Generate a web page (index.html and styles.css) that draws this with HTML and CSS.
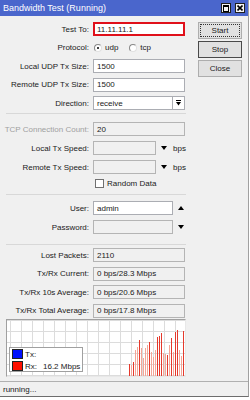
FILE: index.html
```html
<!DOCTYPE html>
<html lang="en">
<head>
    <meta charset="UTF-8">
    <title>Bandwidth Test (Running)</title>
    <link rel="stylesheet" href="styles.css">
</head>
<body>
    <div class="window">
        <div class="titlebar">
            <span class="title">Bandwidth Test (Running)</span>
            <div class="wbtns">
                <span class="wbtn"><span class="maxbox"></span></span>
                <span class="wbtn">
                    <svg width="6" height="6" viewBox="0 0 6 6"><path d="M0.5 0.5 L5.5 5.5 M5.5 0.5 L0.5 5.5" stroke="#000" stroke-width="1.6"/></svg>
                </span>
            </div>
        </div>

        <div class="main">
            <div class="form">
                <div class="group">
                    <div class="row">
                        <span class="label">Test To:</span>
                        <span class="field red">11.11.11.1</span>
                    </div>
                    <div class="row">
                        <span class="label">Protocol:</span>
                        <span class="radio on"></span><span class="opt">udp</span>
                        <span class="radio"></span><span class="opt">tcp</span>
                    </div>
                    <div class="row">
                        <span class="label">Local UDP Tx Size:</span>
                        <span class="field">1500</span>
                    </div>
                    <div class="row">
                        <span class="label">Remote UDP Tx Size:</span>
                        <span class="field">1500</span>
                    </div>
                    <div class="row">
                        <span class="label">Direction:</span>
                        <span class="field short">receive</span>
                        <span class="dropbtn">
                            <svg width="5" height="6" viewBox="0 0 5 6"><path d="M0 0.5 H5" stroke="#000" stroke-width="1"/><path d="M0 2 H5 L2.5 5.5 Z" fill="#000"/></svg>
                        </span>
                    </div>
                </div>

                <div class="sep first"></div>

                <div class="group wide">
                    <div class="row">
                        <span class="label dim">TCP Connection Count:</span>
                        <span class="field off">20</span>
                    </div>
                    <div class="row">
                        <span class="label">Local Tx Speed:</span>
                        <span class="field off speed"></span>
                        <span class="arrow down"></span>
                        <span class="unit">bps</span>
                    </div>
                    <div class="row">
                        <span class="label">Remote Tx Speed:</span>
                        <span class="field off speed"></span>
                        <span class="arrow down"></span>
                        <span class="unit">bps</span>
                    </div>
                    <div class="row check-row">
                        <span class="label"></span>
                        <span class="checkbox"></span>
                        <span class="opt">Random Data</span>
                    </div>
                </div>

                <div class="sep second"></div>

                <div class="group wide">
                    <div class="row">
                        <span class="label">User:</span>
                        <span class="field short">admin</span>
                        <span class="arrow up"></span>
                    </div>
                    <div class="row">
                        <span class="label">Password:</span>
                        <span class="field short off"></span>
                        <span class="arrow down"></span>
                    </div>
                </div>

                <div class="sep third"></div>

                <div class="group">
                    <div class="row">
                        <span class="label">Lost Packets:</span>
                        <span class="field off">2110</span>
                    </div>
                    <div class="row">
                        <span class="label">Tx/Rx Current:</span>
                        <span class="field off">0 bps/28.3 Mbps</span>
                    </div>
                    <div class="row">
                        <span class="label">Tx/Rx 10s Average:</span>
                        <span class="field off">0 bps/20.6 Mbps</span>
                    </div>
                    <div class="row">
                        <span class="label">Tx/Rx Total Average:</span>
                        <span class="field off">0 bps/17.8 Mbps</span>
                    </div>
                </div>

                <div class="graph">
                    <div class="bars">
                        <span class="bar deep" style="height: 12px"></span>
                        <span class="bar pale" style="height: 11px"></span>
                        <span class="bar deep" style="height: 14px"></span>
                        <span class="bar pale" style="height: 26px"></span>
                        <span class="bar pale" style="height: 29px"></span>
                        <span class="bar deep" style="height: 36px"></span>
                        <span class="bar pale" style="height: 28px"></span>
                        <span class="bar pale" style="height: 18px"></span>
                        <span class="bar pale" style="height: 28px"></span>
                        <span class="bar pale" style="height: 31px"></span>
                        <span class="bar deep" style="height: 34px"></span>
                        <span class="bar pale" style="height: 24px"></span>
                        <span class="bar pale" style="height: 19px"></span>
                        <span class="bar pale" style="height: 26px"></span>
                        <span class="bar deep" style="height: 39px"></span>
                        <span class="bar deep" style="height: 40px"></span>
                        <span class="bar deep" style="height: 43px"></span>
                        <span class="bar pale" style="height: 23px"></span>
                        <span class="bar pale" style="height: 22px"></span>
                        <span class="bar deep" style="height: 21px"></span>
                        <span class="bar pale" style="height: 31px"></span>
                        <span class="bar deep" style="height: 38px"></span>
                        <span class="bar pale" style="height: 24px"></span>
                        <span class="bar deep" style="height: 44px"></span>
                        <span class="bar deep" style="height: 46px"></span>
                        <span class="bar pale" style="height: 26px"></span>
                        <span class="bar pale" style="height: 20px"></span>
                        <span class="bar deep" style="height: 45px"></span>
                    </div>
                    <div class="legend">
                        <div class="legend-item"><span class="swatch tx"></span>Tx:</div>
                        <div class="legend-item"><span class="swatch rx"></span>Rx:<span class="rate">16.2 Mbps</span></div>
                    </div>
                </div>
            </div>

            <div class="side">
                <span class="btn focus">Start</span>
                <span class="btn default">Stop</span>
                <span class="btn">Close</span>
            </div>
        </div>

        <div class="status">running...</div>
    </div>
</body>
</html>
```

FILE: styles.css
```css
html, body {
    margin: 0;
    padding: 0;
    background-color: white;
}

body {
    font-family: "Liberation Sans", Arial, sans-serif;
    font-size: 8px;
    color: #1a1a1a;
}

.window {
    width: 248px;
    height: 396px;
    background-color: #f0f0f0;
    border-right: 1px solid #a0a0a0;
    border-bottom: 1px solid #6d6d6d;
    display: flex;
    flex-direction: column;
}

.titlebar {
    height: 16px;
    flex-shrink: 0;
    background-color: #4a66cc;
    color: white;
    display: flex;
    align-items: center;
    justify-content: space-between;
    padding: 0 3px;
}

.title {
    font-size: 9px;
}

.wbtns {
    display: flex;
    gap: 4px;
}

.wbtn {
    width: 8px;
    height: 8px;
    border: 1px solid #1e1e1e;
    background-color: #f4f4f4;
    display: flex;
    align-items: center;
    justify-content: center;
}

.maxbox {
    width: 4px;
    height: 4px;
    border: 1px solid #000;
    border-top-width: 2px;
}

.main {
    display: flex;
}

.form {
    width: 186px;
    padding-top: 6px;
}

.group {
    display: flex;
    flex-direction: column;
    gap: 4.5px;
}

.group.wide {
    gap: 5px;
}

.row {
    display: flex;
    align-items: center;
    height: 14px;
}

.label {
    width: 93px;
    flex-shrink: 0;
    box-sizing: border-box;
    padding-right: 4px;
    text-align: right;
    white-space: nowrap;
}

.label.dim {
    color: #a0a0a0;
}

.field {
    width: 92px;
    height: 14px;
    box-sizing: border-box;
    border: 1px solid #abadb3;
    background-color: white;
    padding-left: 3px;
    display: flex;
    align-items: center;
    white-space: nowrap;
}

.field.red {
    border: 2px solid #e0101a;
    padding-left: 2px;
}

.field.off {
    background-color: #f0f0f0;
    border-color: #b4b4b4;
}

.field.short {
    width: 80px;
}

.field.speed {
    width: 63px;
}

.dropbtn {
    width: 12px;
    height: 14px;
    box-sizing: border-box;
    border: 1px solid #abadb3;
    border-left: none;
    background-color: white;
    display: flex;
    align-items: center;
    justify-content: center;
}

.arrow {
    width: 0;
    height: 0;
    border-left: 3px solid transparent;
    border-right: 3px solid transparent;
    margin-left: 5px;
}

.arrow.down {
    border-top: 4px solid #000;
}

.arrow.up {
    border-bottom: 4px solid #000;
}

.unit {
    margin-left: 6px;
}

.radio {
    width: 6px;
    height: 6px;
    border-radius: 50%;
    border: 1px solid #888;
    border-right-color: #e0e0e0;
    border-bottom-color: #e0e0e0;
    background-color: white;
    margin-left: 1px;
    display: flex;
    align-items: center;
    justify-content: center;
}

.radio.on::after {
    content: "";
    width: 2px;
    height: 2px;
    border-radius: 50%;
    background-color: #000;
}

.opt {
    margin-left: 3px;
    margin-right: 10px;
}

.check-row {
    height: 10px;
    align-items: flex-start;
}

.checkbox {
    width: 7px;
    height: 7px;
    border: 1px solid #707070;
    background-color: white;
    margin-left: 2px;
}

.checkbox + .opt {
    margin-left: 3px;
}

.sep {
    height: 1px;
    width: 180px;
    margin-left: 6px;
    background-color: #d8d8d8;
}

.sep.first {
    margin-top: 3px;
    margin-bottom: 8px;
}

.sep.second {
    margin-top: 5px;
    margin-bottom: 6px;
}

.sep.third {
    margin-top: 10px;
    margin-bottom: 3px;
}

.graph {
    position: relative;
    margin-top: 1.5px;
    margin-left: 6px;
    width: 178px;
    height: 56px;
    border: 1px solid #a0a0a0;
    border-right-color: #e8e8e8;
    border-bottom-color: #e8e8e8;
    background-color: white;
    background-image:
        linear-gradient(to right, #dcdcdc 1px, transparent 1px),
        linear-gradient(to bottom, #dcdcdc 1px, transparent 1px);
    background-size: 11px 11px;
    background-position: 3px 0;
}

.bars {
    position: absolute;
    left: 122px;
    right: 0;
    bottom: 0;
    height: 56px;
    display: flex;
    align-items: flex-end;
    gap: 1px;
}

.bar {
    width: 1px;
}

.bar.pale {
    background-color: #f4a596;
}

.bar.deep {
    background-color: #e5392c;
}

.legend {
    position: absolute;
    left: 2px;
    top: 27px;
    width: 70px;
    height: 22px;
    border: 1px solid #a0a0a0;
    background-color: white;
    padding: 1px 0 0 2px;
    display: flex;
    flex-direction: column;
    gap: 2px;
}

.legend-item {
    display: flex;
    align-items: center;
    height: 10px;
}

.swatch {
    width: 9px;
    height: 8px;
    border: 1px solid #222;
    margin-right: 2px;
}

.swatch.tx {
    background-color: #0010ff;
}

.swatch.rx {
    background-color: #ff1000;
}

.rate {
    margin-left: 6px;
}

.side {
    display: flex;
    flex-direction: column;
    gap: 2px;
    padding-top: 6px;
    margin-left: 12px;
}

.btn {
    width: 44px;
    height: 17px;
    box-sizing: border-box;
    border: 1px solid #adadad;
    background-color: #e1e1e1;
    display: flex;
    align-items: center;
    justify-content: center;
}

.btn.focus {
    outline: 1px dotted #333;
    outline-offset: -3px;
}

.btn.default {
    border-color: #4a4a4a;
}

.status {
    margin-top: auto;
    height: 14px;
    border-top: 1px solid #b0b0b0;
    padding-left: 3px;
    display: flex;
    align-items: center;
}
```
